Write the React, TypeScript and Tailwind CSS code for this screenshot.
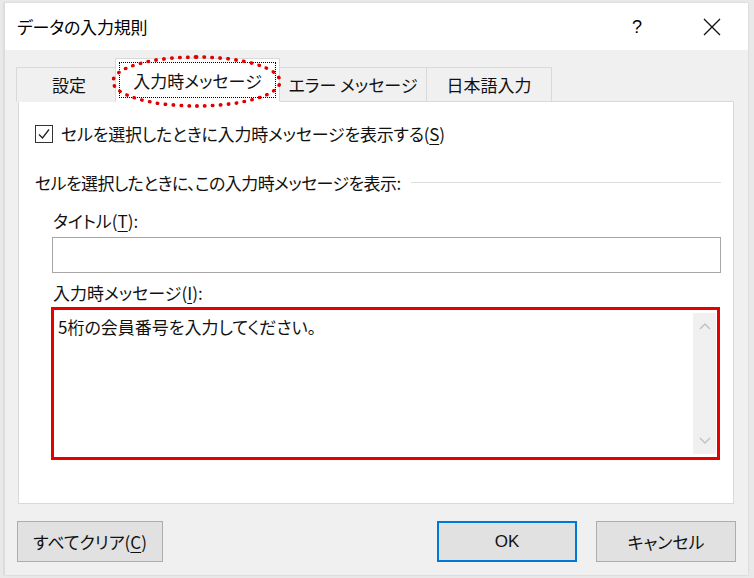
import React from "react";

const F = "font-['Meiryo_UI','Noto_Sans_CJK_JP',sans-serif] [font-feature-settings:'palt']";

function U({ children }: { children: React.ReactNode }) {
  return <span className="underline underline-offset-[3px] decoration-[1px]">{children}</span>;
}

export default function App() {
  return (
    <div className={`w-[754px] h-[578px] bg-[#e9e9e9] pt-[3px] pl-[4px] ${F} text-[#111]`}>
      <div className="w-[744px] h-[572px] flex flex-col border-l border-[#dcdcdc] bg-[#f0f0f0] shadow-[0_0_2px_rgba(0,0,0,0.15)]">
        {/* title bar */}
        <div className="h-[47px] bg-white flex items-center pl-[12px] shrink-0">
          <div className="text-[17px] leading-none tracking-[-0.2px] text-black">データの入力規則</div>
          <div className="flex-1" />
          <div className="text-[18px] leading-none text-black w-[20px] text-center mr-[56px] font-['Liberation_Sans',sans-serif]">?</div>
          <svg width="18" height="18" viewBox="0 0 18 18" className="mr-[27px]">
            <path d="M1 1 L17 17 M17 1 L1 17" stroke="#111" strokeWidth="1.3" fill="none" />
          </svg>
        </div>

        {/* body */}
        <div className="flex-1 flex flex-col pl-[12px] pr-[14px]">
          {/* tabs */}
          <div className="relative flex items-end h-[51px] z-10">
            <div className="w-[100px] ml-[-1px] h-[35px] -mb-px border border-[#d9d9d9] border-b-transparent bg-[#f0f0f0] flex items-center justify-center text-[17px] pl-[6px]">
              設定
            </div>
            <div className="w-[165px] -ml-px h-[44px] -mb-px border border-[#d9d9d9] border-b-white bg-white flex items-center justify-center p-[3px]">
              <div className="w-full h-full border border-dotted border-black flex items-center justify-center text-[17px] pt-[2px]">
                入力時メッセージ
              </div>
            </div>
            <div className="w-[147px] h-[35px] -mb-px border border-l-0 border-[#d9d9d9] bg-[#f0f0f0] flex items-center justify-center text-[17px]">
              エラー メッセージ
            </div>
            <div className="w-[125px] h-[35px] -mb-px border border-l-0 border-[#d9d9d9] bg-[#f0f0f0] flex items-center justify-center text-[17px]">
              日本語入力
            </div>
            {/* red dotted ellipse annotation */}
            <div className="absolute left-[94px] top-[5px] w-[171px] h-[53px] rounded-[50%] border-[4px] border-dotted border-[#e00000]" />
          </div>

          {/* panel */}
          <div className="h-[403px] ml-[1px] bg-white border border-[#d9d9d9] pt-[22px] pl-[16px] pr-[12px] text-[17px]">
            <div className="h-[20px] flex items-center">
              <div className="w-[18px] h-[18px] border border-[#333] flex items-center justify-center bg-white">
                <svg width="14" height="14" viewBox="0 0 14 14">
                  <path d="M2 7.5 L5.5 11 L12 2.5" stroke="#222" strokeWidth="1.3" fill="none" />
                </svg>
              </div>
              <div className="ml-[8px] leading-[20px] tracking-[-0.2px]">
                セルを選択したときに入力時メッセージを表示する(<U>S</U>)
              </div>
            </div>

            <div className="mt-[29px] h-[20px] flex items-center">
              <div className="leading-[20px] whitespace-nowrap tracking-[-0.6px]">セルを選択したときに、この入力時メッセージを表示:</div>
              <div className="flex-1 h-px bg-[#dcdcdc] ml-[10px] -mt-[2px]" />
            </div>

            <div className="mt-[18px] h-[20px] pl-[18px] leading-[20px]">
              タイトル(<U>T</U>):
            </div>

            <div className="mt-[6px] ml-[17px] h-[36px] border border-[#a6a6a6] bg-white" />

            <div className="mt-[10px] h-[20px] pl-[18px] leading-[20px]">
              入力時メッセージ(<U>I</U>):
            </div>

            <div className="mt-[4px] ml-[16px] mr-[1px] h-[153px] border-[3px] border-[#e60000] flex bg-white">
              <div className="flex-1 pl-[4px] pt-[7px] leading-[20px] text-[17px]">5桁の会員番号を入力してください。</div>
              <div className="w-[23px] my-[3px] mr-[1px] bg-[#f0f0f0] flex flex-col justify-between items-center py-[9px]">
                <svg width="12" height="8" viewBox="0 0 12 8">
                  <path d="M1 7 L6 2 L11 7" stroke="#c2c2c2" strokeWidth="1.5" fill="none" />
                </svg>
                <svg width="12" height="8" viewBox="0 0 12 8">
                  <path d="M1 1 L6 6 L11 1" stroke="#c2c2c2" strokeWidth="1.5" fill="none" />
                </svg>
              </div>
            </div>
          </div>

          {/* buttons */}
          <div className="mt-[17px] flex items-start text-[17px]">
            <div className="w-[146px] h-[41px] border border-[#adadad] bg-[#e1e1e1] flex items-center justify-center">
              すべてクリア(<U>C</U>)
            </div>
            <div className="flex-1" />
            <div className="w-[140px] h-[41px] border-2 border-[#0078d7] bg-[#e1e1e1] flex items-center justify-center font-['Liberation_Sans',sans-serif] text-[17px]">
              OK
            </div>
            <div className="w-[140px] h-[41px] ml-[19px] mr-[-2px] border border-[#adadad] bg-[#e1e1e1] flex items-center justify-center">
              キャンセル
            </div>
          </div>
        </div>
      </div>
    </div>
  );
}
